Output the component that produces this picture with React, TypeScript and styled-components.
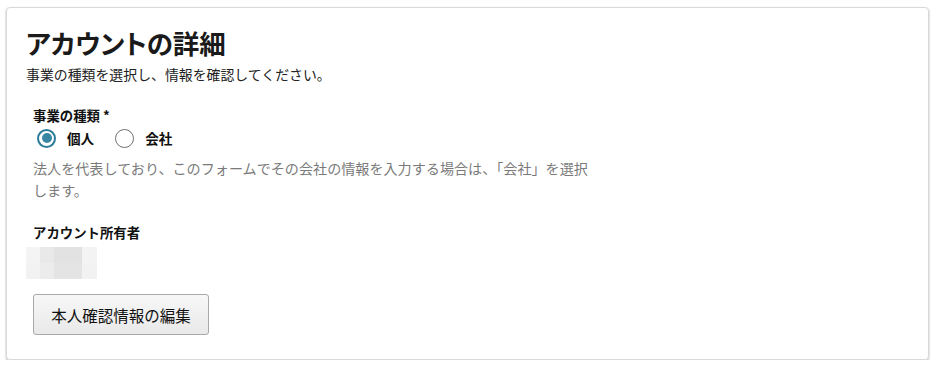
import React from "react";
import styled, { createGlobalStyle } from "styled-components";

const Global = createGlobalStyle`
  html, body { margin: 0; padding: 0; background: #ffffff; }
  body { font-family: "Noto Sans CJK JP", "Noto Sans", sans-serif; color: #111; }
`;

const Page = styled.div`
  padding: 7px 11px 0 6px;
`;

const Card = styled.section`
  box-sizing: border-box;
  height: 353px;
  border: 1px solid #d9d9d9;
  border-radius: 4px;
  box-shadow: 0 1px 2px rgba(0, 0, 0, 0.35);
  padding: 18px 19px;
  display: flex;
  flex-direction: column;
`;

const Title = styled.h1`
  margin: 0;
  font-size: 26.5px;
  line-height: 34px;
  font-weight: 700;
  color: #1a1a1a;
  font-feature-settings: "palt";
`;

const Subtitle = styled.p`
  margin: 4px 0 0;
  font-size: 13.9px;
  line-height: 20px;
  color: #222;
`;

const Section = styled.div`
  padding-left: 7px;
  display: flex;
  flex-direction: column;
`;

const FieldLabel = styled.div<{ $top: number }>`
  margin-top: ${(p) => p.$top}px;
  font-size: 13.4px;
  line-height: 18px;
  font-weight: 700;
  color: #111;
`;

const RadioRow = styled.div`
  display: flex;
  align-items: center;
  gap: 21px;
  margin-top: 3px;
  padding-left: 4px;
`;

const RadioOption = styled.label`
  display: flex;
  align-items: center;
  gap: 11px;
  font-size: 13.6px;
  font-weight: 700;
  line-height: 22px;
`;

const RadioCircle = styled.span<{ $checked?: boolean }>`
  box-sizing: border-box;
  width: 19px;
  height: 19px;
  border-radius: 50%;
  border: ${(p) => (p.$checked ? "2px solid #2b7c98" : "1.5px solid #6f6f6f")};
  display: flex;
  align-items: center;
  justify-content: center;
  background: #fff;
  &::after {
    content: "";
    display: ${(p) => (p.$checked ? "block" : "none")};
    width: 10px;
    height: 10px;
    border-radius: 50%;
    background: #3a87a3;
  }
`;

const Help = styled.p`
  margin: 8px 0 0;
  max-width: 568px;
  font-size: 14.1px;
  line-height: 22px;
  color: #7a7a7a;
`;

const Redacted = styled.div`
  margin-top: 6px;
  margin-left: -7px;
  width: 71px;
  height: 32px;
  display: grid;
  grid-template-columns: 14px 14px 28px 15px;
  grid-template-rows: 16px 16px;
`;

const Pix = styled.span<{ $c: string }>`
  background: ${(p) => p.$c};
`;

const Button = styled.button`
  margin-top: 15px;
  align-self: flex-start;
  width: 176px;
  height: 41px;
  border: 1px solid #a9a9a9;
  border-radius: 3px;
  background: linear-gradient(#f7f7f7, #e9e9e9);
  font-family: "Noto Sans CJK JP", "Noto Sans", sans-serif;
  font-size: 15.5px;
  color: #111;
  padding: 0;
`;

const pix = [
  "#f4f4f4", "#e9e9e9", "#e2e2e2", "#f3f3f3",
  "#f2f2f2", "#ececec", "#e4e4e4", "#f2f2f2",
];

export default function App() {
  return (
    <>
      <Global />
      <Page>
        <Card>
          <Title>アカウントの詳細</Title>
          <Subtitle>事業の種類を選択し、情報を確認してください。</Subtitle>
          <Section>
            <FieldLabel $top={22}>事業の種類 *</FieldLabel>
            <RadioRow>
              <RadioOption>
                <RadioCircle $checked />
                個人
              </RadioOption>
              <RadioOption>
                <RadioCircle />
                会社
              </RadioOption>
            </RadioRow>
            <Help>
              法人を代表しており、このフォームでその会社の情報を入力する場合は、「会社」を選択します。
            </Help>
            <FieldLabel $top={22}>アカウント所有者</FieldLabel>
            <Redacted>
              {pix.map((c, i) => (
                <Pix key={i} $c={c} />
              ))}
            </Redacted>
            <Button>本人確認情報の編集</Button>
          </Section>
        </Card>
      </Page>
    </>
  );
}
